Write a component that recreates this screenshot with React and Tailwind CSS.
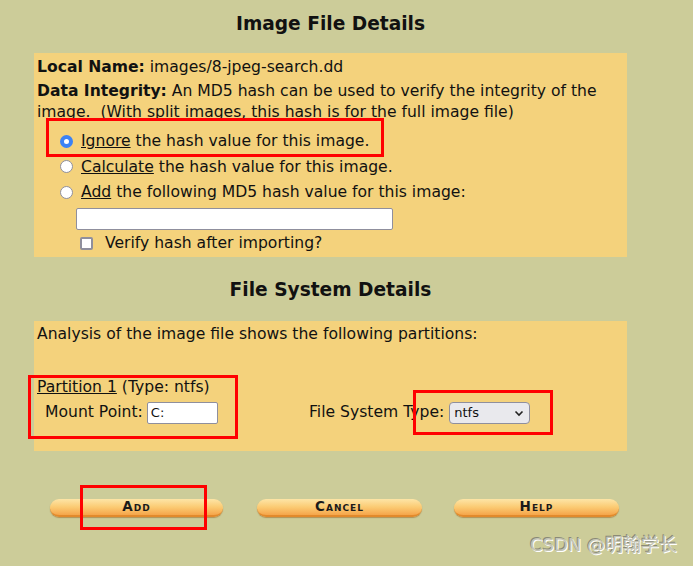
import React from 'react'

const font = { fontFamily: '"DejaVu Sans", Verdana, sans-serif' }

function Knopf({ label, className = '' }) {
  return (
    <button
      type="button"
      className={`h-[18px] rounded-full border-b-2 border-[#e28a2c] bg-gradient-to-b from-[#fde5a6] via-[#fbcb73] to-[#f5a54a] shadow-[0_1px_1px_rgba(150,90,20,0.5)] text-[13.5px] font-bold leading-none text-[#1a1a1a] ${className}`}
      style={{ fontFamily: '"DejaVu Sans", sans-serif', fontVariant: 'small-caps', letterSpacing: '1px' }}
    >
      {label}
    </button>
  )
}

function Radio({ checked }) {
  return (
    <span
      className={`inline-block w-[13px] h-[13px] rounded-full border shrink-0 ${
        checked ? 'border-[#3b82f6] border-[4px] bg-white' : 'border-[#8f8f9d] bg-white'
      }`}
    />
  )
}

function Rahmen({ className }) {
  return <div className={`absolute border-[3px] border-[#ff0000] pointer-events-none ${className}`} />
}

export default function App() {
  return (
    <div className="relative w-[693px] h-[566px] bg-[#cccc99] text-[15.6px] text-[#111] overflow-hidden" style={font}>
      <div className="pt-[11px] pl-[34px] w-[627px]">
        <h3 className="text-center text-[18.6px] font-bold leading-[24px] pt-[1px] -mb-[1px]">Image File Details</h3>

        <div className="mt-[18px] bg-[#f4d27c] px-[3px] pt-[3px] pb-[1px] leading-[22px]">
          <div><b>Local Name:</b> images/8-jpeg-search.dd</div>
          <div className="mt-[3px] leading-[21px]">
            <b>Data Integrity:</b> An MD5 hash can be used to verify the integrity of the image. &nbsp;(With split
            images, this hash is for the full image file)
          </div>
          <div className="mt-[5px] ml-[23px] flex flex-col">
            <label className="flex items-center gap-[8px] h-[26px]">
              <Radio checked />
              <span><u>Ignore</u> the hash value for this image.</span>
            </label>
            <label className="flex items-center gap-[8px] h-[25px]">
              <Radio />
              <span><u>Calculate</u> the hash value for this image.</span>
            </label>
            <label className="flex items-center gap-[8px] h-[26px]">
              <Radio />
              <span><u>Add</u> the following MD5 hash value for this image:</span>
            </label>
            <div className="pl-[16px] mt-[3px]">
              <div className="w-[317px] h-[22px] bg-white border border-[#8f8f9d] rounded-[2px]" />
            </div>
            <label className="flex items-center gap-[12px] h-[26px] pl-[20px]">
              <span className="inline-block w-[13px] h-[13px] border-2 border-[#8f8f9d] rounded-[2px] bg-white" />
              <span>Verify hash after importing?</span>
            </label>
          </div>
        </div>

        <h3 className="mt-[21px] text-center text-[18.6px] font-bold leading-[24px]">File System Details</h3>

        <div className="mt-[19px] bg-[#f4d27c] px-[3px] pt-[2px] h-[130px]">
          <div className="leading-[22px]">Analysis of the image file shows the following partitions:</div>
          <div className="mt-[31px] leading-[22px]">
            <u>Partition 1</u> (Type: ntfs)
          </div>
          <div className="flex items-center h-[24px] mt-[3px]">
            <div className="flex items-center w-[272px] pl-[8px]">
              <span>Mount Point:</span>
              <span className="ml-[4px] w-[71px] h-[22px] bg-white border border-[#8f8f9d] rounded-[2px] text-[13px] leading-[20px] pl-[3px]">
                C:
              </span>
            </div>
            <span>File System Type:</span>
            <span className="ml-[5px] w-[81px] h-[22px] bg-[#e9e9ed] border border-[#8f8f9d] rounded-[4px] flex items-center justify-between px-[4px] text-[13px]">
              ntfs
              <svg width="12" height="12" viewBox="0 0 12 12" fill="none" stroke="#222" strokeWidth="1.6">
                <path d="M2.5 4.5l3.5 3.5 3.5-3.5" />
              </svg>
            </span>
          </div>
        </div>
      </div>

      <div className="flex items-center mt-[48px] pl-[50px] gap-[34px]">
        <Knopf label="Add" className="w-[173px]" />
        <Knopf label="Cancel" className="w-[165px]" />
        <Knopf label="Help" className="w-[165px] -ml-[2px]" />
      </div>

      <div
        className="absolute right-[16px] bottom-[8px] text-[18px] text-[#c4c4b4]"
        style={{ fontFamily: '"DejaVu Sans", "Noto Sans CJK SC", sans-serif', textShadow: '1px 1px 0 #fff, -1px -1px 0 #8a8a78' }}
      >
        CSDN @明翰学长
      </div>

      <Rahmen className="left-[46px] top-[118px] w-[338px] h-[39px]" />
      <Rahmen className="left-[28px] top-[375px] w-[210px] h-[64px]" />
      <Rahmen className="left-[413px] top-[390px] w-[140px] h-[45px]" />
      <Rahmen className="left-[80px] top-[485px] w-[127px] h-[45px]" />
    </div>
  )
}
